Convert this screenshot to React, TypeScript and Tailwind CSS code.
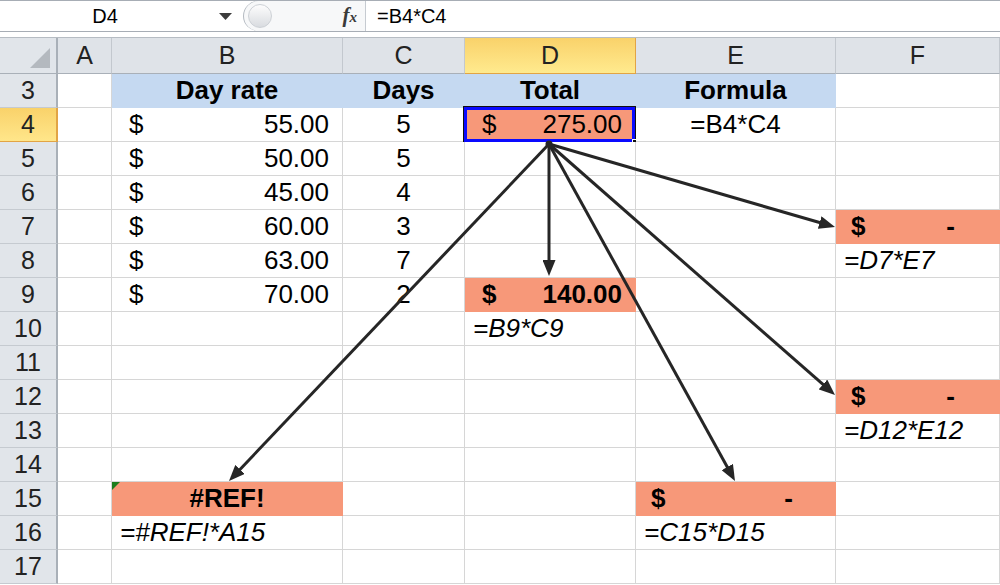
import React from "react";

type Fill = "blue" | "salmon" | undefined;
type CellDef = { v?: React.ReactNode; fill?: Fill; flag?: boolean; selected?: boolean };

const cols = ["A", "B", "C", "D", "E", "F"];
const rows = [3, 4, 5, 6, 7, 8, 9, 10, 11, 12, 13, 14, 15, 16, 17];
const grid = "grid grid-cols-[58px_54px_231px_122px_171px_200px_164px]";

function Money({ amount, bold = false }: { amount: string; bold?: boolean }) {
  return (
    <div className={`flex h-full items-center justify-between pl-[17px] pr-[13px] ${bold ? "font-bold" : ""}`}>
      <span>$</span>
      <span>{amount}</span>
    </div>
  );
}

function Zero({ right }: { right: string }) {
  return (
    <div className="flex h-full items-center justify-between pl-[15px] font-bold">
      <span>$</span>
      <span className={right}>-</span>
    </div>
  );
}

function Mid({ children, bold = false }: { children: React.ReactNode; bold?: boolean }) {
  return (
    <div className={`flex h-full items-center justify-center ${bold ? "font-bold" : ""}`}>{children}</div>
  );
}

function Formula({ children }: { children: React.ReactNode }) {
  return <div className="flex h-full items-center pl-[8px] italic whitespace-nowrap">{children}</div>;
}

const rates = ["55.00", "50.00", "45.00", "60.00", "63.00", "70.00"];
const days = ["5", "5", "4", "3", "7", "2"];

const cells: Record<string, CellDef> = {
  B3: { fill: "blue", v: <Mid bold>Day rate</Mid> },
  C3: { fill: "blue", v: <Mid bold>Days</Mid> },
  D3: { fill: "blue", v: <Mid bold>Total</Mid> },
  E3: { fill: "blue", v: <Mid bold>Formula</Mid> },
  D4: { fill: "salmon", selected: true, v: <Money amount="275.00" /> },
  E4: { v: <Mid>=B4*C4</Mid> },
  F7: { fill: "salmon", v: <Zero right="pr-[44px]" /> },
  F8: { v: <Formula>=D7*E7</Formula> },
  D9: { fill: "salmon", v: <Money amount="140.00" bold /> },
  D10: { v: <Formula>=B9*C9</Formula> },
  F12: { fill: "salmon", v: <Zero right="pr-[44px]" /> },
  F13: { v: <Formula>=D12*E12</Formula> },
  B15: { fill: "salmon", flag: true, v: <Mid bold>#REF!</Mid> },
  E15: { fill: "salmon", v: <Zero right="pr-[42px]" /> },
  B16: { v: <Formula>=#REF!*A15</Formula> },
  E16: { v: <Formula>=C15*D15</Formula> },
};

rates.forEach((r, i) => {
  cells["B" + (i + 4)] = { v: <Money amount={r} /> };
  cells["C" + (i + 4)] = { v: <Mid>{days[i]}</Mid> };
});

function Cell({ def }: { def?: CellDef }) {
  const fill = def?.fill;
  const tone =
    fill === "blue"
      ? "bg-[#c5d9f1] border-[#c5d9f1]"
      : fill === "salmon"
        ? "bg-[#f79879] border-[#f79879]"
        : "bg-white border-[#d6d6d6]";
  return (
    <div className={`relative h-[34px] border-r border-b ${tone}`}>
      {def?.v}
      {def?.flag && (
        <svg className="absolute left-0 top-0" width="8" height="8">
          <path d="M0 0h8L0 8z" fill="#1d7d1d" />
        </svg>
      )}
      {def?.selected && (
        <div className="absolute left-[-2px] top-[-2px] right-[-1px] bottom-[-2px] border border-[#111]">
          <div className="h-full w-full border-[3px] border-[#0a0aff]" />
          <div className="absolute right-[-4px] bottom-[-4px] h-[7px] w-[7px] border border-white bg-[#111]" />
        </div>
      )}
    </div>
  );
}

const origin = { x: 549, y: 144 };
const targets = [
  { x: 229, y: 481 },
  { x: 549, y: 276 },
  { x: 735, y: 481 },
  { x: 835, y: 395 },
  { x: 835, y: 227 },
];

function Arrows() {
  return (
    <svg className="pointer-events-none absolute left-0 top-0" width="1000" height="585">
      <defs>
        <marker
          id="head"
          markerUnits="userSpaceOnUse"
          markerWidth="16"
          markerHeight="13"
          refX="8"
          refY="6.5"
          orient="auto"
        >
          <path d="M0 0L16 6.5L0 13z" fill="#262626" />
        </marker>
      </defs>
      {targets.map((t, i) => {
        const dx = t.x - origin.x;
        const dy = t.y - origin.y;
        const len = Math.hypot(dx, dy);
        const ex = t.x - (dx / len) * 8;
        const ey = t.y - (dy / len) * 8;
        return (
          <line
            key={i}
            x1={origin.x}
            y1={origin.y}
            x2={ex}
            y2={ey}
            stroke="#262626"
            strokeWidth="3"
            markerEnd="url(#head)"
          />
        );
      })}
      <circle cx={origin.x} cy={origin.y} r="3.5" fill="#262626" />
    </svg>
  );
}

export default function App() {
  return (
    <div className="relative h-[585px] w-[1000px] overflow-hidden bg-white font-['Liberation_Sans',Arial,sans-serif] text-black">
      {/* formula bar */}
      <div className="flex h-[32px] border-y border-[#a7adb5] bg-white">
        <div className="relative flex w-[243px] items-center">
          <span className="w-[210px] text-center text-[20px]">D4</span>
          <svg className="absolute left-[219px] top-[12px]" width="13" height="8">
            <path d="M0 0h13L6.5 7z" fill="#3c3c3c" />
          </svg>
        </div>
        <div className="relative flex w-[122px] items-center justify-end rounded-l-[15px] border-l border-[#b3b9c0] bg-[#f7f8f9] pr-[8px]">
          <div className="absolute left-[4px] top-[3px] h-[24px] w-[24px] rounded-full border border-[#cdd1d6] bg-linear-to-b from-[#fdfdfd] to-[#d9dce0]" />
          <span className="font-['Liberation_Serif',serif] text-[21px] font-bold italic text-[#3a3a3a]">
            f<span className="text-[15px]">x</span>
          </span>
        </div>
        <div className="flex flex-1 items-center border-l border-[#c6cbd1] pl-[11px] text-[20px]">=B4*C4</div>
      </div>
      <div className="h-[6px] border-b border-[#b6bcc3] bg-white" />

      {/* column headers */}
      <div className={grid}>
        <div className="relative h-[36px] border-r-2 border-b border-[#a9b0b8] bg-[#e1e5ea]">
          <svg className="absolute left-[30px] top-[10px]" width="20" height="20">
            <path d="M20 0V20H0z" fill="#b4b9bf" />
          </svg>
        </div>
        {cols.map((c) =>
          c === "D" ? (
            <div
              key={c}
              className="flex h-[36px] items-center justify-center border-r border-b border-[#e2a445] bg-linear-to-b from-[#f9d26a] to-[#ffea8e] text-[25px] text-[#222]"
            >
              {c}
            </div>
          ) : (
            <div
              key={c}
              className="flex h-[36px] items-center justify-center border-r border-b border-r-[#c3c8ce] border-b-[#a9b0b8] bg-[#dfe3e8] text-[25px] text-[#222]"
            >
              {c}
            </div>
          )
        )}
      </div>

      {/* rows */}
      {rows.map((n) => (
        <div key={n} className={grid}>
          {n === 4 ? (
            <div className="flex h-[34px] items-center justify-center border-r-2 border-b border-[#e2a445] bg-linear-to-b from-[#f9d26a] to-[#ffe68a] text-[25px] text-[#222]">
              {n}
            </div>
          ) : (
            <div className="flex h-[34px] items-center justify-center border-r-2 border-b border-r-[#a9b0b8] border-b-[#c5cad0] bg-[#e1e5ea] text-[25px] text-[#222]">
              {n}
            </div>
          )}
          {cols.map((c) => (
            <div key={c} className="text-[26px]">
              <Cell def={cells[c + n]} />
            </div>
          ))}
        </div>
      ))}

      <Arrows />
    </div>
  );
}
